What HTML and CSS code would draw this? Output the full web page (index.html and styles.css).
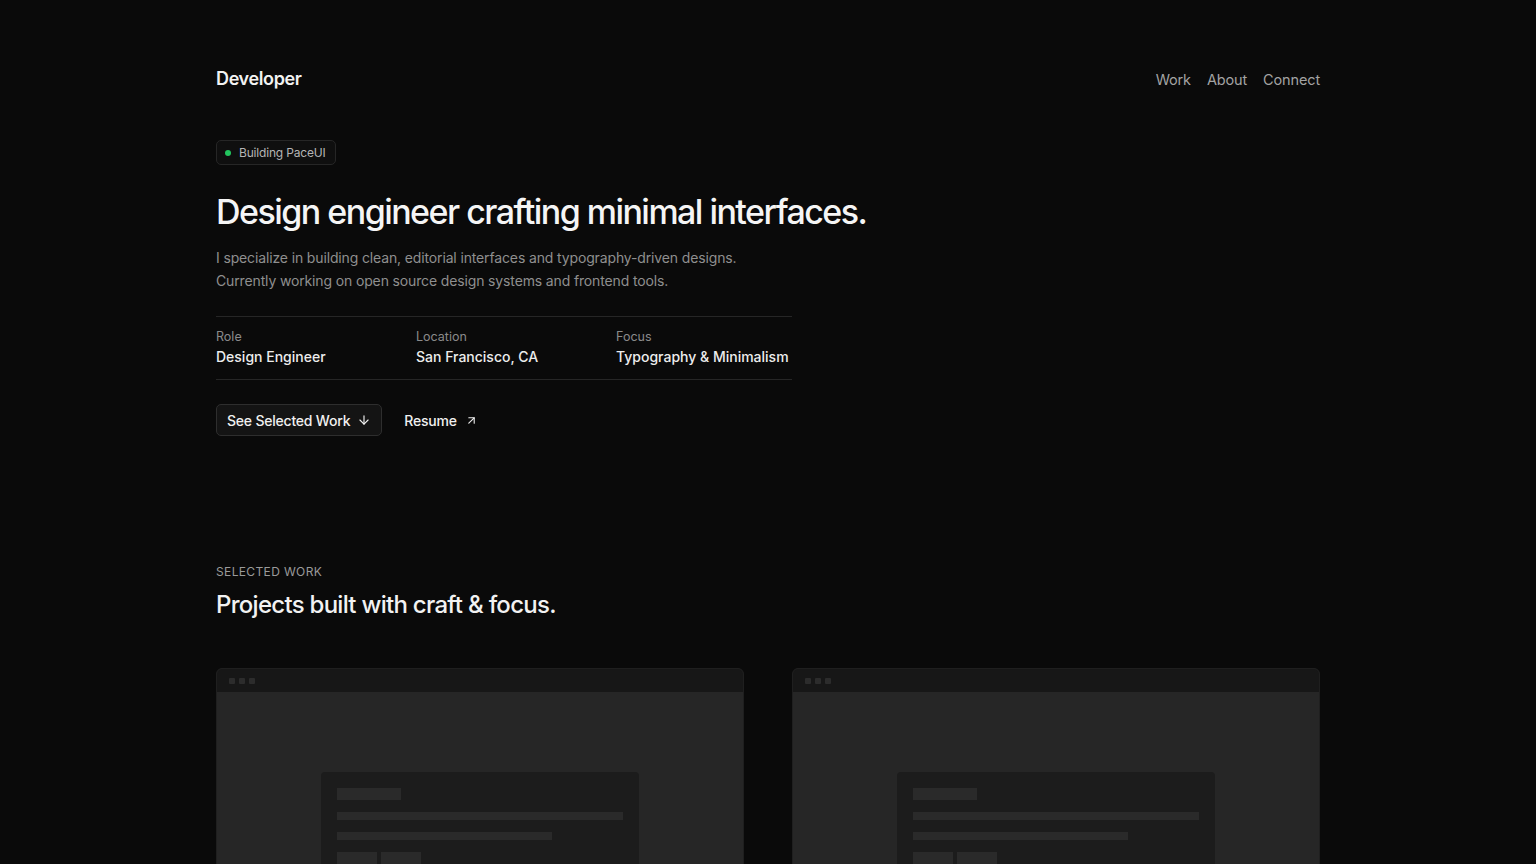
FILE: index.html
```html
<!DOCTYPE html>
<html>
<head>
  <meta charset="utf-8">
  <title>Developer</title>
  <link rel="stylesheet" href="styles.css">
</head>
<body>

<div class="page">

  <header class="nav">
    <a class="brand" href="#">Developer</a>
    <nav class="links">
      <a href="#work">Work</a>
      <a href="#about">About</a>
      <a href="#connect">Connect</a>
    </nav>
  </header>

  <section class="hero">
    <div class="badge"><span class="dot"></span>Building PaceUI</div>
    <h1>Design engineer crafting minimal interfaces.</h1>
    <p class="lead">
      I specialize in building clean, editorial interfaces and typography-driven designs.<br>
      Currently working on open source design systems and frontend tools.
    </p>

    <div class="meta">
      <div class="meta-item">
        <div class="meta-label">Role</div>
        <div class="meta-value">Design Engineer</div>
      </div>
      <div class="meta-item">
        <div class="meta-label">Location</div>
        <div class="meta-value">San Francisco, CA</div>
      </div>
      <div class="meta-item">
        <div class="meta-label">Focus</div>
        <div class="meta-value">Typography &amp; Minimalism</div>
      </div>
    </div>

    <div class="actions">
      <a class="button" href="#work">See Selected Work
        <svg width="14" height="14" viewBox="0 0 24 24" fill="none" stroke="currentColor" stroke-width="2" stroke-linecap="round" stroke-linejoin="round"><path d="M12 5v14"/><path d="M19 12l-7 7-7-7"/></svg>
      </a>
      <a class="link" href="#">Resume
        <svg width="13" height="13" viewBox="0 0 24 24" fill="none" stroke="currentColor" stroke-width="2" stroke-linecap="round" stroke-linejoin="round"><path d="M7 17L17 7"/><path d="M7 7h10v10"/></svg>
      </a>
    </div>
  </section>

  <section class="work" id="work">
    <div class="eyebrow">Selected Work</div>
    <h2>Projects built with craft &amp; focus.</h2>

    <div class="grid">
      <div class="card">
        <div class="card-bar"><span></span><span></span><span></span></div>
        <div class="card-body">
          <div class="mock">
            <div class="mock-title"></div>
            <div class="mock-line"></div>
            <div class="mock-line short"></div>
            <div class="mock-buttons"><span></span><span></span></div>
          </div>
        </div>
      </div>
      <div class="card">
        <div class="card-bar"><span></span><span></span><span></span></div>
        <div class="card-body">
          <div class="mock">
            <div class="mock-title"></div>
            <div class="mock-line"></div>
            <div class="mock-line short"></div>
            <div class="mock-buttons"><span></span><span></span></div>
          </div>
        </div>
      </div>
    </div>
  </section>

</div>

</body>
</html>
```

FILE: styles.css
```css
body {
  margin: 0;
  background: #0a0a0a;
  color: #ededed;
  font-family: 'Inter', 'Liberation Sans', sans-serif;
  font-size: 15px;
}

a {
  color: inherit;
  text-decoration: none;
}

.page {
  max-width: 1104px;
  margin: 0 auto;
  padding: 0 24px;
}

/* nav */
.nav {
  display: flex;
  justify-content: space-between;
  align-items: center;
  padding-top: 65px;
  padding-bottom: 1px;
  height: 26px;
}

.brand {
  font-size: 18px;
  font-weight: 600;
  letter-spacing: -0.02em;
  color: #f2f2f2;
}

.links {
  display: flex;
  gap: 16px;
  margin-top: 2px;
}

.links a {
  font-size: 14.5px;
  letter-spacing: -0.01em;
  color: #a3a3a3;
}

/* hero */
.hero {
  padding-top: 48px;
}

.badge {
  display: inline-flex;
  align-items: center;
  gap: 8px;
  height: 23px;
  padding: 0 9px 0 8px;
  border: 1px solid #262626;
  border-radius: 5px;
  background: #0f0f0f;
  font-size: 12px;
  letter-spacing: -0.015em;
  color: #b5b5b5;
}

.dot {
  width: 6px;
  height: 6px;
  border-radius: 50%;
  background: #22c55e;
}

h1 {
  margin: 25px 0 0;
  font-size: 34px;
  font-weight: 500;
  letter-spacing: -0.045em;
  line-height: 44px;
  color: #f5f5f5;
}

.lead {
  margin: 12px 0 0;
  font-size: 14px;
  letter-spacing: -0.01em;
  line-height: 23px;
  color: #8f8f8f;
}

.meta {
  display: grid;
  grid-template-columns: repeat(3, 200px);
  width: 576px;
  margin-top: 24px;
  padding: 12px 0 12px;
  border-top: 1px solid #262626;
  border-bottom: 1px solid #262626;
}

.meta-label {
  font-size: 12.5px;
  color: #8a8a8a;
  line-height: 16px;
}

.meta-value {
  margin-top: 2px;
  font-size: 14px;
  font-weight: 500;
  color: #ededed;
  line-height: 20px;
}

.actions {
  display: flex;
  align-items: center;
  gap: 22px;
  margin-top: 24px;
}

.button {
  display: inline-flex;
  align-items: center;
  gap: 7px;
  height: 30px;
  padding: 0 10px;
  border: 1px solid #2e2e2e;
  border-radius: 5px;
  background: #141414;
  font-size: 14px;
  font-weight: 500;
  letter-spacing: -0.015em;
  color: #f0f0f0;
}

.link {
  display: inline-flex;
  align-items: center;
  gap: 8px;
  font-size: 14px;
  font-weight: 500;
  letter-spacing: -0.015em;
  color: #f0f0f0;
}

/* selected work */
.work {
  padding-top: 128px;
}

.eyebrow {
  font-size: 12px;
  text-transform: uppercase;
  letter-spacing: 0.03em;
  color: #9a9a9a;
}

h2 {
  margin: 11px 0 0;
  font-size: 24px;
  font-weight: 500;
  letter-spacing: -0.03em;
  color: #f2f2f2;
}

.grid {
  display: grid;
  grid-template-columns: 1fr 1fr;
  gap: 48px;
  margin-top: 49px;
}

.card {
  border: 1px solid #1f1f1f;
  border-radius: 6px;
  overflow: hidden;
  background: #262626;
}

.card-bar {
  display: flex;
  gap: 4px;
  align-items: center;
  height: 23px;
  padding: 0 12px;
  background: #171717;
}

.card-bar span {
  width: 6px;
  height: 6px;
  border-radius: 1px;
  background: #2c2c2c;
}

.card-body {
  height: 306px;
  display: flex;
  justify-content: center;
  padding-top: 80px;
  box-sizing: border-box;
}

.mock {
  width: 318px;
  height: 160px;
  box-sizing: border-box;
  padding: 16px;
  border-radius: 4px;
  background: #1c1c1c;
}

.mock-title {
  width: 64px;
  height: 12px;
  background: #2a2a2a;
}

.mock-line {
  height: 8px;
  margin-top: 12px;
  background: #2a2a2a;
}

.mock-line.short {
  width: 215px;
}

.mock-buttons {
  display: flex;
  gap: 4px;
  margin-top: 12px;
}

.mock-buttons span {
  width: 40px;
  height: 16px;
  background: #2a2a2a;
}
```
